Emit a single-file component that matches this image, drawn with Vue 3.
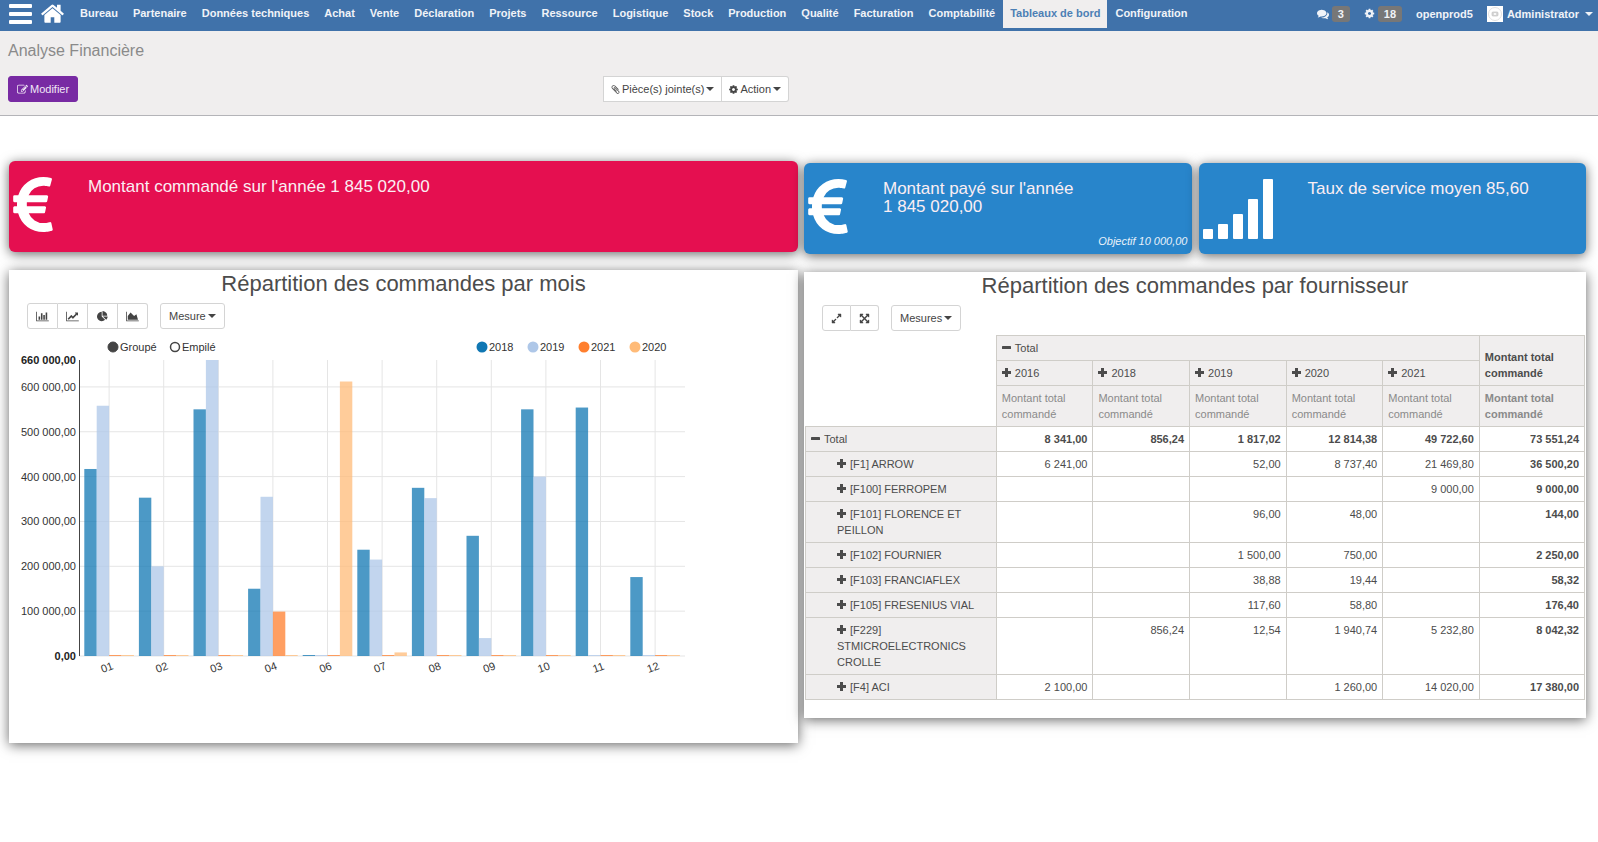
<script setup>
const menu = [
  'Bureau', 'Partenaire', 'Données techniques', 'Achat', 'Vente', 'Déclaration',
  'Projets', 'Ressource', 'Logistique', 'Stock', 'Production', 'Qualité',
  'Facturation', 'Comptabilité', 'Tableaux de bord', 'Configuration',
]
const activeMenu = 'Tableaux de bord'

const icons = {
  home: 'M1472 992v480q0 26-19 45t-45 19h-384v-384h-256v384h-384q-26 0-45-19t-19-45v-480q0-1 .5-3t.5-3l575-474 575 474q1 2 1 6zm223-69l-62 74q-8 9-21 11h-3q-13 0-21-7l-692-577-692 577q-12 8-24 7-13-2-21-11l-62-74q-8-10-7-23.5t11-21.5l719-599q32-26 76-26t76 26l244 204v-195q0-14 9-23t23-9h192q14 0 23 9t9 23v408l219 182q10 8 11 21.5t-7 23.5z',
  edit: 'M888 1184l116-116-152-152-116 116v56h96v96h56zm440-720q-16-16-33 1l-350 350q-17 17-1 33t33-1l350-350q17-17 1-33zm80 594v190q0 119-84.5 203.5t-203.5 84.5h-832q-119 0-203.5-84.5t-84.5-203.5v-832q0-119 84.5-203.5t203.5-84.5h832q63 0 117 25 15 7 18 23 3 17-9 29l-49 49q-14 14-32 8-23-6-45-6h-832q-66 0-113 47t-47 113v832q0 66 47 113t113 47h832q66 0 113-47t47-113v-126q0-13 9-22l64-64q15-15 35-7t20 29zm-96-738l288 288-672 672h-288v-288zm444 132l-92 92-288-288 92-92q28-28 68-28t68 28l152 152q28 28 28 68t-28 68z',
  cog: 'M1152 896q0-106-75-181t-181-75-181 75-75 181 75 181 181 75 181-75 75-181zm512-109v222q0 12-8 23t-20 13l-185 28q-19 54-39 91 35 50 107 138 10 12 10 25t-9 23q-27 37-99 108t-94 71q-12 0-26-9l-138-108q-44 23-91 38-16 136-29 186-7 28-36 28h-222q-14 0-24.5-8.5t-11.5-21.5l-28-184q-49-16-90-37l-141 107q-10 9-25 9-14 0-25-11-126-114-165-168-7-10-7-23 0-12 8-23 15-21 51-66.5t54-70.5q-27-50-41-99l-183-27q-13-2-21-12.5t-8-23.5v-222q0-12 8-23t19-13l186-28q14-46 39-92-40-57-107-138-10-12-10-24 0-10 9-23 26-36 98.5-107.5t94.5-71.5q13 0 26 10l138 107q44-23 91-38 16-136 29-186 7-28 36-28h222q14 0 24.5 8.5t11.5 21.5l28 184q49 16 90 37l142-107q9-9 24-9 13 0 25 10 129 119 165 170 7 8 7 22 0 12-8 23-15 21-51 66.5t-54 70.5q26 50 41 98l183 28q13 2 21 12.5t8 23.5z',
  comments: 'M1408 768q0 139-94 257t-256.5 186.5-353.5 68.5q-86 0-176-16-124 88-278 128-36 9-86 16h-3q-11 0-20.5-8t-11.5-21q-1-3-1-6.5t.5-6.5 2-6l2.5-5 3.5-5.5 4-5 4.5-5 4-4.5q5-6 23-25t26-29.5 22.5-29 25-38.5 20.5-44q-124-72-195-177t-71-224q0-139 94-257t256.5-186.5 353.5-68.5 353.5 68.5 256.5 186.5 94 257zm384 256q0 120-71 224.5t-195 176.5q10 24 20.5 44t25 38.5 22.5 29 26 29.5 23 25q1 1 4 4.5t4.5 5 4 5 3.5 5.5l2.5 5 2 6 .5 6.5-1 6.5q-3 14-13 22t-22 7q-50-7-86-16-154-40-278-128-90 16-176 16-271 0-472-132 58 4 88 4 161 0 309-45t264-129q125-92 192-212t67-254q0-77-23-152 129 71 204 178t75 230z',
  clip: 'M1596 1385q0 117-79 196t-196 79q-135 0-235-100l-777-776q-113-115-113-271 0-159 110-270t269-111q158 0 273 113l605 606q10 10 10 22 0 16-30.5 46.5t-46.5 30.5q-13 0-23-10l-606-607q-79-77-181-77-106 0-179 75t-73 181q0 105 76 181l776 777q63 63 145 63 64 0 106-42t42-106q0-82-63-145l-581-581q-26-24-60-24-29 0-48 19t-19 48q0 32 25 59l410 410q10 10 10 22 0 16-31 47t-47 31q-12 0-22-10l-410-410q-63-61-63-149 0-82 57-139t139-57q88 0 149 63l581 581q100 98 100 235z',
  expand: 'M883 1056q0 13-10 23l-332 332 144 144q19 19 19 45t-19 45-45 19h-448q-26 0-45-19t-19-45v-448q0-26 19-45t45-19 45 19l144 144 332-332q10-10 23-10t23 10l114 114q10 10 10 23zm781-864v448q0 26-19 45t-45 19-45-19l-144-144-332 332q-10 10-23 10t-23-10l-114-114q-10-10-10-23t10-23l332-332-144-144q-19-19-19-45t19-45 45-19h448q26 0 45 19t19 45z',
  arrows: 'M1411 541l-355 355 355 355 144-144q29-31 70-14 39 17 39 59v448q0 26-19 45t-45 19h-448q-42 0-59-40-17-39 14-69l144-144-355-355-355 355 144 144q31 30 14 69-17 40-59 40h-448q-26 0-45-19t-19-45v-448q0-42 40-59 39-17 69 14l144 144 355-355-355-355-144 144q-19 19-45 19-12 0-24-5-40-17-40-59v-448q0-26 19-45t45-19h448q42 0 59 40 17 39-14 69l-144 144 355 355 355-355-144-144q-31-30-14-69 17-40 59-40h448q26 0 45 19t19 45v448q0 42-39 59-13 5-25 5-26 0-45-19z',
  euro: 'M1360 1307l35 159q3 12-3 22.5t-17 14.5l-5 1q-4 2-10.5 3.5t-16 4.5-21.5 5.5-25.5 5-30 5-33.5 4.5-36.5 3-38.5 1q-234 0-409-130.5t-238-351.5h-95q-13 0-22.5-9.5t-9.5-22.5v-113q0-13 9.5-22.5t22.5-9.5h66q-2-57 1-105h-67q-14 0-23-9t-9-23v-114q0-14 9-23t23-9h98q67-210 243.5-338t400.5-128q102 0 194 23 11 3 20 15 6 11 3 24l-43 159q-3 13-14 19.5t-24 2.5l-4-1q-4-1-11.5-2.5l-17.5-3.5-22.5-3.5-26-3-29-2.5-29.5-1q-126 0-226 64t-150 176h468q16 0 25 12 10 12 7 26l-24 114q-5 26-32 26h-488q-3 37 0 105h459q15 0 25 12 9 12 6 27l-24 112q-2 11-11 18.5t-20 7.5h-387q48 117 149.5 185.5t228.5 68.5q18 0 36-1.5t33.5-3.5 29.5-4.5 24.5-5 18.5-4.5l12-3 5-2q13-5 26 2 12 7 15 21z',
}

const chartTypes = [
  { label: 'Barres', box: '0 0 2048 1792', d: 'M640 896v512h-256v-512h256zm384-512v1024h-256v-1024h256zm1024 1152v128h-2048v-1536h128v1408h1920zm-640-896v768h-256v-768h256zm384-384v1152h-256v-1152h256z' },
  { label: 'Lignes', box: '0 0 2048 1792', d: 'M2048 1536v128h-2048v-1536h128v1408h1920zm-128-1248v435q0 21-19.5 29.5t-35.5-7.5l-121-121-633 633q-10 10-23 10t-23-10l-233-233-416 416-192-192 585-585q10-10 23-10t23 10l233 233 464-464-121-121q-16-16-7.5-35.5t29.5-19.5h435q14 0 23 9t9 23z' },
  { label: 'Secteurs', box: '0 0 1792 1792', d: 'M768 890l546 546q-106 108-247.5 168t-298.5 60q-209 0-385.5-103t-279.5-279.5-103-385.5 103-385.5 279.5-279.5 385.5-103v762zm187 6h773q0 157-60 298.5t-168 247.5zm709-128h-768v-768q209 0 385.5 103t279.5 279.5 103 385.5z' },
  { label: 'Aires', box: '0 0 2048 1792', d: 'M2048 1536v128h-2048v-1536h128v1408h1920zm-384-1024l256 896h-1664v-576l448-576 576 576z' },
]

const series = [
  { name: '2018', color: '#1077b3' },
  { name: '2019', color: '#aec7e8' },
  { name: '2021', color: '#ff7f2e' },
  { name: '2020', color: '#ffbb78' },
]
const months = [
  { label: '01', values: [417000, 558000, 0, 0] },
  { label: '02', values: [353000, 200000, 0, 0] },
  { label: '03', values: [550000, 660000, 0, 0] },
  { label: '04', values: [150000, 355000, 99000, 0] },
  { label: '06', values: [2000, 0, 0, 612000] },
  { label: '07', values: [237000, 215000, 0, 8000] },
  { label: '08', values: [375000, 352000, 0, 0] },
  { label: '09', values: [268000, 40000, 0, 0] },
  { label: '10', values: [550000, 400000, 0, 0] },
  { label: '11', values: [554000, 0, 0, 0] },
  { label: '12', values: [176000, 0, 0, 0] },
]
const ticks = [
  { value: 660000, label: '660 000,00', edge: true },
  { value: 600000, label: '600 000,00' },
  { value: 500000, label: '500 000,00' },
  { value: 400000, label: '400 000,00' },
  { value: 300000, label: '300 000,00' },
  { value: 200000, label: '200 000,00' },
  { value: 100000, label: '100 000,00' },
  { value: 0, label: '0,00', edge: true },
]

// Plot geometry, in the drawing's own units
const plot = { left: 70, right: 676, top: 27, bottom: 323 }
const pitch = 54.6
const barWidth = 12.4
const yOf = (v) => plot.bottom - (v / 660000) * (plot.bottom - plot.top)
const groupX = (i) => plot.left + 5.3 + pitch * i
const barHeight = (v) => Math.max(1, plot.bottom - yOf(v))

const years = ['2016', '2018', '2019', '2020', '2021']
const rows = [
  { name: 'Total', total: true, cells: ['8 341,00', '856,24', '1 817,02', '12 814,38', '49 722,60', '73 551,24'] },
  { name: '[F1] ARROW', cells: ['6 241,00', '', '52,00', '8 737,40', '21 469,80', '36 500,20'] },
  { name: '[F100] FERROPEM', cells: ['', '', '', '', '9 000,00', '9 000,00'] },
  { name: '[F101] FLORENCE ET PEILLON', cells: ['', '', '96,00', '48,00', '', '144,00'] },
  { name: '[F102] FOURNIER', cells: ['', '', '1 500,00', '750,00', '', '2 250,00'] },
  { name: '[F103] FRANCIAFLEX', cells: ['', '', '38,88', '19,44', '', '58,32'] },
  { name: '[F105] FRESENIUS VIAL', cells: ['', '', '117,60', '58,80', '', '176,40'] },
  { name: '[F229] STMICROELECTRONICS CROLLE', cells: ['', '856,24', '12,54', '1 940,74', '5 232,80', '8 042,32'] },
  { name: '[F4] ACI', cells: ['2 100,00', '', '', '1 260,00', '14 020,00', '17 380,00'] },
]
</script>

<template>
  <div class="app">
    <nav class="navbar">
      <button class="icon-btn" aria-label="Menu">
        <svg class="bars" viewBox="0 0 23 20"><rect width="23" height="4" rx="1" /><rect y="8" width="23" height="4" rx="1" /><rect y="16" width="23" height="4" rx="1" /></svg>
      </button>
      <a href="#" class="home" aria-label="Accueil">
        <svg viewBox="80 230 1632 1306"><path :d="icons.home" /></svg>
      </a>
      <ul class="menu">
        <li v-for="m in menu" :key="m">
          <a href="#" :class="{ active: m === activeMenu }">{{ m }}</a>
        </li>
      </ul>
      <div class="systray">
        <a href="#" class="counter"><svg class="ic12" viewBox="0 0 1792 1792"><path :d="icons.comments" /></svg><span class="badge">3</span></a>
        <a href="#" class="counter"><svg class="ic11" viewBox="0 0 1792 1792"><path :d="icons.cog" /></svg><span class="badge">18</span></a>
        <a href="#" class="db">openprod5</a>
        <a href="#" class="user">
          <svg class="avatar" viewBox="0 0 16 16">
            <rect width="16" height="16" fill="#fff" />
            <circle cx="8" cy="8" r="6.5" fill="none" stroke="#e2e2e2" />
            <rect x="5" y="6" width="6" height="4" rx="1" fill="#d9d9d9" stroke="#bbb" stroke-width=".6" />
            <circle cx="8" cy="8" r="1.1" fill="#fff" />
          </svg>
          Administrator <i class="caret"></i>
        </a>
      </div>
    </nav>

    <header class="control">
      <h1>Analyse Financière</h1>
      <div class="control-row">
        <button class="btn primary"><svg class="ic11" viewBox="0 0 1792 1792"><path :d="icons.edit" /></svg>Modifier</button>
        <div class="group">
          <button class="btn square"><svg class="ic9" viewBox="100 100 1592 1592"><path :d="icons.clip" /></svg>Pièce(s) jointe(s) <i class="caret"></i></button>
          <button class="btn"><svg class="ic9" viewBox="100 100 1592 1592"><path :d="icons.cog" /></svg>Action <i class="caret"></i></button>
        </div>
      </div>
    </header>

    <main class="board">
      <section class="col">
        <div class="tile pink">
          <svg class="euro" viewBox="384 128 1014 1408"><path :d="icons.euro" /></svg>
          <div class="tile-body"><p>Montant commandé sur l'année 1 845 020,00</p></div>
        </div>
        <article class="panel graph">
          <h2>Répartition des commandes par mois</h2>
          <div class="toolbar">
            <div class="group">
              <button v-for="t in chartTypes" :key="t.label" class="btn tool" :aria-label="t.label">
                <svg class="chart-ic" :viewBox="t.box"><path :d="t.d" /></svg>
              </button>
            </div>
            <button class="btn">Mesure <i class="caret"></i></button>
          </div>
          <svg class="chart" viewBox="0 0 700 345" role="img" aria-label="Commandes par mois">
            <circle cx="104" cy="14" r="5" fill="#444" stroke="#444" />
            <text x="111" y="18">Groupé</text>
            <circle cx="166" cy="14" r="4.5" fill="#fff" stroke="#444" stroke-width="1.5" />
            <text x="173" y="18">Empilé</text>
            <g v-for="(s, i) in series" :key="s.name">
              <circle :cx="473 + i * 51" cy="14" r="5.5" :fill="s.color" />
              <text :x="480 + i * 51" y="18">{{ s.name }}</text>
            </g>
            <line v-for="t in ticks.slice(1)" :key="'h' + t.value" class="grid" :x1="plot.left" :x2="plot.right" :y1="yOf(t.value)" :y2="yOf(t.value)" />
            <line v-for="(m, i) in months" :key="'v' + m.label" class="grid" :x1="groupX(i) + 2 * barWidth" :x2="groupX(i) + 2 * barWidth" :y1="plot.top" :y2="plot.bottom" />
            <g v-for="(m, i) in months" :key="m.label">
              <rect
                v-for="(v, j) in m.values" :key="j" class="bar"
                :x="groupX(i) + j * barWidth" :y="plot.bottom - barHeight(v)"
                :width="barWidth" :height="barHeight(v)" :fill="series[j].color"
              />
              <text text-anchor="middle" :transform="`translate(${groupX(i) + 24} 338) rotate(-20)`">{{ m.label }}</text>
            </g>
            <line class="axis" :x1="plot.left + 0.5" :x2="plot.left + 0.5" :y1="plot.top" :y2="plot.bottom" />
            <text v-for="t in ticks" :key="t.label" text-anchor="end" :class="{ edge: t.edge }" :x="plot.left - 3" :y="yOf(t.value) + 4">{{ t.label }}</text>
          </svg>
        </article>
      </section>

      <section class="col right">
        <div class="tiles">
          <div class="tile blue">
            <svg class="euro" viewBox="384 128 1014 1408"><path :d="icons.euro" /></svg>
            <div class="tile-body">
              <p>Montant payé sur l'année<br>1 845 020,00</p>
              <em>Objectif 10 000,00</em>
            </div>
          </div>
          <div class="tile blue">
            <svg class="signal" viewBox="0 0 70 60">
              <rect y="50" width="10" height="10" rx="1" /><rect x="15" y="45" width="10" height="15" rx="1" /><rect x="30" y="35" width="10" height="25" rx="1" /><rect x="45" y="20" width="10" height="40" rx="1" /><rect x="60" width="10" height="60" rx="1" />
            </svg>
            <div class="tile-body"><p>Taux de service moyen 85,60</p></div>
          </div>
        </div>
        <article class="panel pivot">
          <h2>Répartition des commandes par fournisseur</h2>
          <div class="toolbar">
            <div class="group">
              <button class="btn tool" aria-label="Inverser les axes"><svg class="ic11" viewBox="0 0 1792 1792"><path :d="icons.expand" /></svg></button>
              <button class="btn tool" aria-label="Tout développer"><svg class="ic11" viewBox="0 0 1792 1792"><path :d="icons.arrows" /></svg></button>
            </div>
            <button class="btn">Mesures <i class="caret"></i></button>
          </div>
          <table>
            <colgroup>
              <col class="c-name"><col v-for="y in years" :key="y" class="c-year"><col>
            </colgroup>
            <thead>
              <tr>
                <td class="blank" rowspan="3"></td>
                <th colspan="5"><svg class="sign" viewBox="0 0 9 9"><rect y="3" width="9" height="3" rx=".6" /></svg>Total</th>
                <th class="grand" rowspan="2">Montant total commandé</th>
              </tr>
              <tr>
                <th v-for="y in years" :key="y"><svg class="sign" viewBox="0 0 9 9"><path d="M3 0h3v3h3v3H6v3H3V6H0V3h3z" /></svg>{{ y }}</th>
              </tr>
              <tr>
                <th v-for="y in years" :key="y" class="measure">Montant total commandé</th>
                <th class="measure grand">Montant total commandé</th>
              </tr>
            </thead>
            <tbody>
              <tr v-for="r in rows" :key="r.name" :class="{ total: r.total }">
                <th :class="{ child: !r.total }">
                  <svg class="sign" viewBox="0 0 9 9"><rect v-if="r.total" y="3" width="9" height="3" rx=".6" /><path v-else d="M3 0h3v3h3v3H6v3H3V6H0V3h3z" /></svg>{{ r.name }}
                </th>
                <td v-for="(c, i) in r.cells" :key="i">{{ c }}</td>
              </tr>
            </tbody>
          </table>
        </article>
      </section>
    </main>
  </div>
</template>

<style>
body { margin: 0; background: #fff; }
</style>

<style scoped>
* { box-sizing: border-box; }
.app {
  font-family: "Liberation Sans", Arial, sans-serif;
  font-size: 11px;
  line-height: 16px;
  color: #4c4c4c;
}
svg { fill: currentColor; flex: none; }
a { color: inherit; text-decoration: none; }
button { font: inherit; cursor: pointer; }
h1, h2, p, ul { margin: 0; padding: 0; }
h1, h2 { font-weight: normal; }

.navbar {
  display: flex;
  height: 31px;
  background: #4072aa;
  color: #f0f3f8;
  font-weight: bold;
}
.icon-btn { height: 27px; margin: 0; padding: 0 0 0 9px; border: 0; background: none; color: #fff; display: flex; align-items: center; }
.bars { width: 23px; height: 20px; }
.home { height: 27px; padding: 0 9px; display: flex; align-items: center; color: #fff; }
.home svg { width: 23px; height: 19px; }
.menu { display: flex; gap: 1px; list-style: none; flex: 1; }
.menu a { display: block; padding: 0 7px; line-height: 27px; height: 28px; white-space: nowrap; }
.menu a.active { background: #f0eeee; color: #4c7fb5; }
.systray { display: flex; align-items: center; height: 27px; gap: 14px; padding-right: 5px; white-space: nowrap; }
.counter { display: flex; align-items: center; gap: 3px; }
.badge { background: #777; border-radius: 3px; padding: 0 6px; height: 16px; }
.user { display: flex; align-items: center; gap: 4px; }
.avatar { width: 16px; height: 16px; }
.caret {
  display: inline-block;
  border: 4px solid transparent;
  border-top: 4px solid currentColor;
  border-bottom: 0;
  vertical-align: middle;
}
.user .caret { margin-left: 2px; }
.ic9 { width: 9px; height: 9px; }
.ic11 { width: 11px; height: 11px; }
.ic12 { width: 12px; height: 12px; }

.control { background: #f0eeee; border-bottom: 1px solid #b4b4b8; padding: 10px 8px 13px; }
.control h1 { font-size: 16px; line-height: 20px; color: #8a8a8a; }
.control-row { display: flex; justify-content: space-between; width: 50%; padding-right: 10px; margin-top: 15px; }
.group { display: flex; }
.btn {
  display: flex;
  align-items: center;
  gap: 2px;
  height: 26px;
  padding: 0 7px;
  border: 1px solid #d4d4d4;
  border-radius: 3px;
  background: #fff;
  color: #444;
  white-space: nowrap;
}
.btn.primary { background: #782aa3; border-color: #782aa3; color: #f1e8f6; padding: 0 8px; }
.group .btn + .btn { border-left: 0; }
.group .btn:not(:last-child) { border-top-right-radius: 0; border-bottom-right-radius: 0; }
.group .btn:not(:first-child) { border-top-left-radius: 0; border-bottom-left-radius: 0; }
.btn.square { border-radius: 0; }

.board {
  display: grid;
  grid-template-columns: 789fr 782fr;
  gap: 6px;
  align-items: start;
  padding: 45px 12px 20px 9px;
}
.col { display: grid; gap: 18px; min-width: 0; }
.right { padding-top: 2px; }
.tiles { display: grid; grid-template-columns: 1fr 1fr; gap: 7px; }
.tile, .panel { box-shadow: 0 2px 12px rgba(0, 0, 0, .6); }
.tile { display: flex; gap: 35px; min-height: 91px; padding: 16px 4px 5px; border-radius: 6px; color: #fff; }
.pink { background: #e50f50; }
.blue { background: #2885cb; }
.euro { width: 40px; height: 55px; }
.signal { width: 70px; height: 60px; }
.tile-body { display: flex; flex-direction: column; flex: 1; }
.tile p { font-size: 17px; line-height: 18px; padding-top: 1px; color: #fbeef3; }
.tile em { margin-top: auto; align-self: flex-end; color: #e8f2fa; }

.panel { background: #fff; }
.panel h2 { font-size: 22px; line-height: 28px; text-align: center; }
.toolbar { display: flex; gap: 12px; padding: 5px 18px 4px; }
.tool { padding: 0 8px; }
.toolbar > .btn { padding: 0 8px; }
.chart-ic { height: 11px; width: 13px; }
.graph { padding-bottom: 65px; }
.chart { display: block; width: 700px; max-width: 100%; }
.chart text { font-size: 11px; fill: #333; }
.chart .edge { font-weight: bold; fill: #222; }
.grid { stroke: #e5e5e5; }
.axis { stroke: #444; }
.bar { fill-opacity: .75; }

.pivot { padding: 0 1px 18px; }
.pivot .toolbar { padding: 5px 17px 4px; }
table { width: 100%; border-collapse: collapse; table-layout: fixed; }
.c-name { width: 24.5%; }
.c-year { width: 12.4%; }
th, td { border: 1px solid #cfcdc8; padding: 4px 5px; vertical-align: top; }
th { background: #f0eeee; font-weight: normal; text-align: left; }
td { text-align: right; height: 25px; }
.blank { border-top: 0; border-left: 0; }
.grand { font-weight: bold; vertical-align: bottom; }
.measure { color: #8a8a8a; }
.child { padding-left: 31px; }
.total td, td:last-child:not(.blank) { font-weight: bold; }
.sign { width: 9px; height: 9px; margin-right: 4px; }
</style>
